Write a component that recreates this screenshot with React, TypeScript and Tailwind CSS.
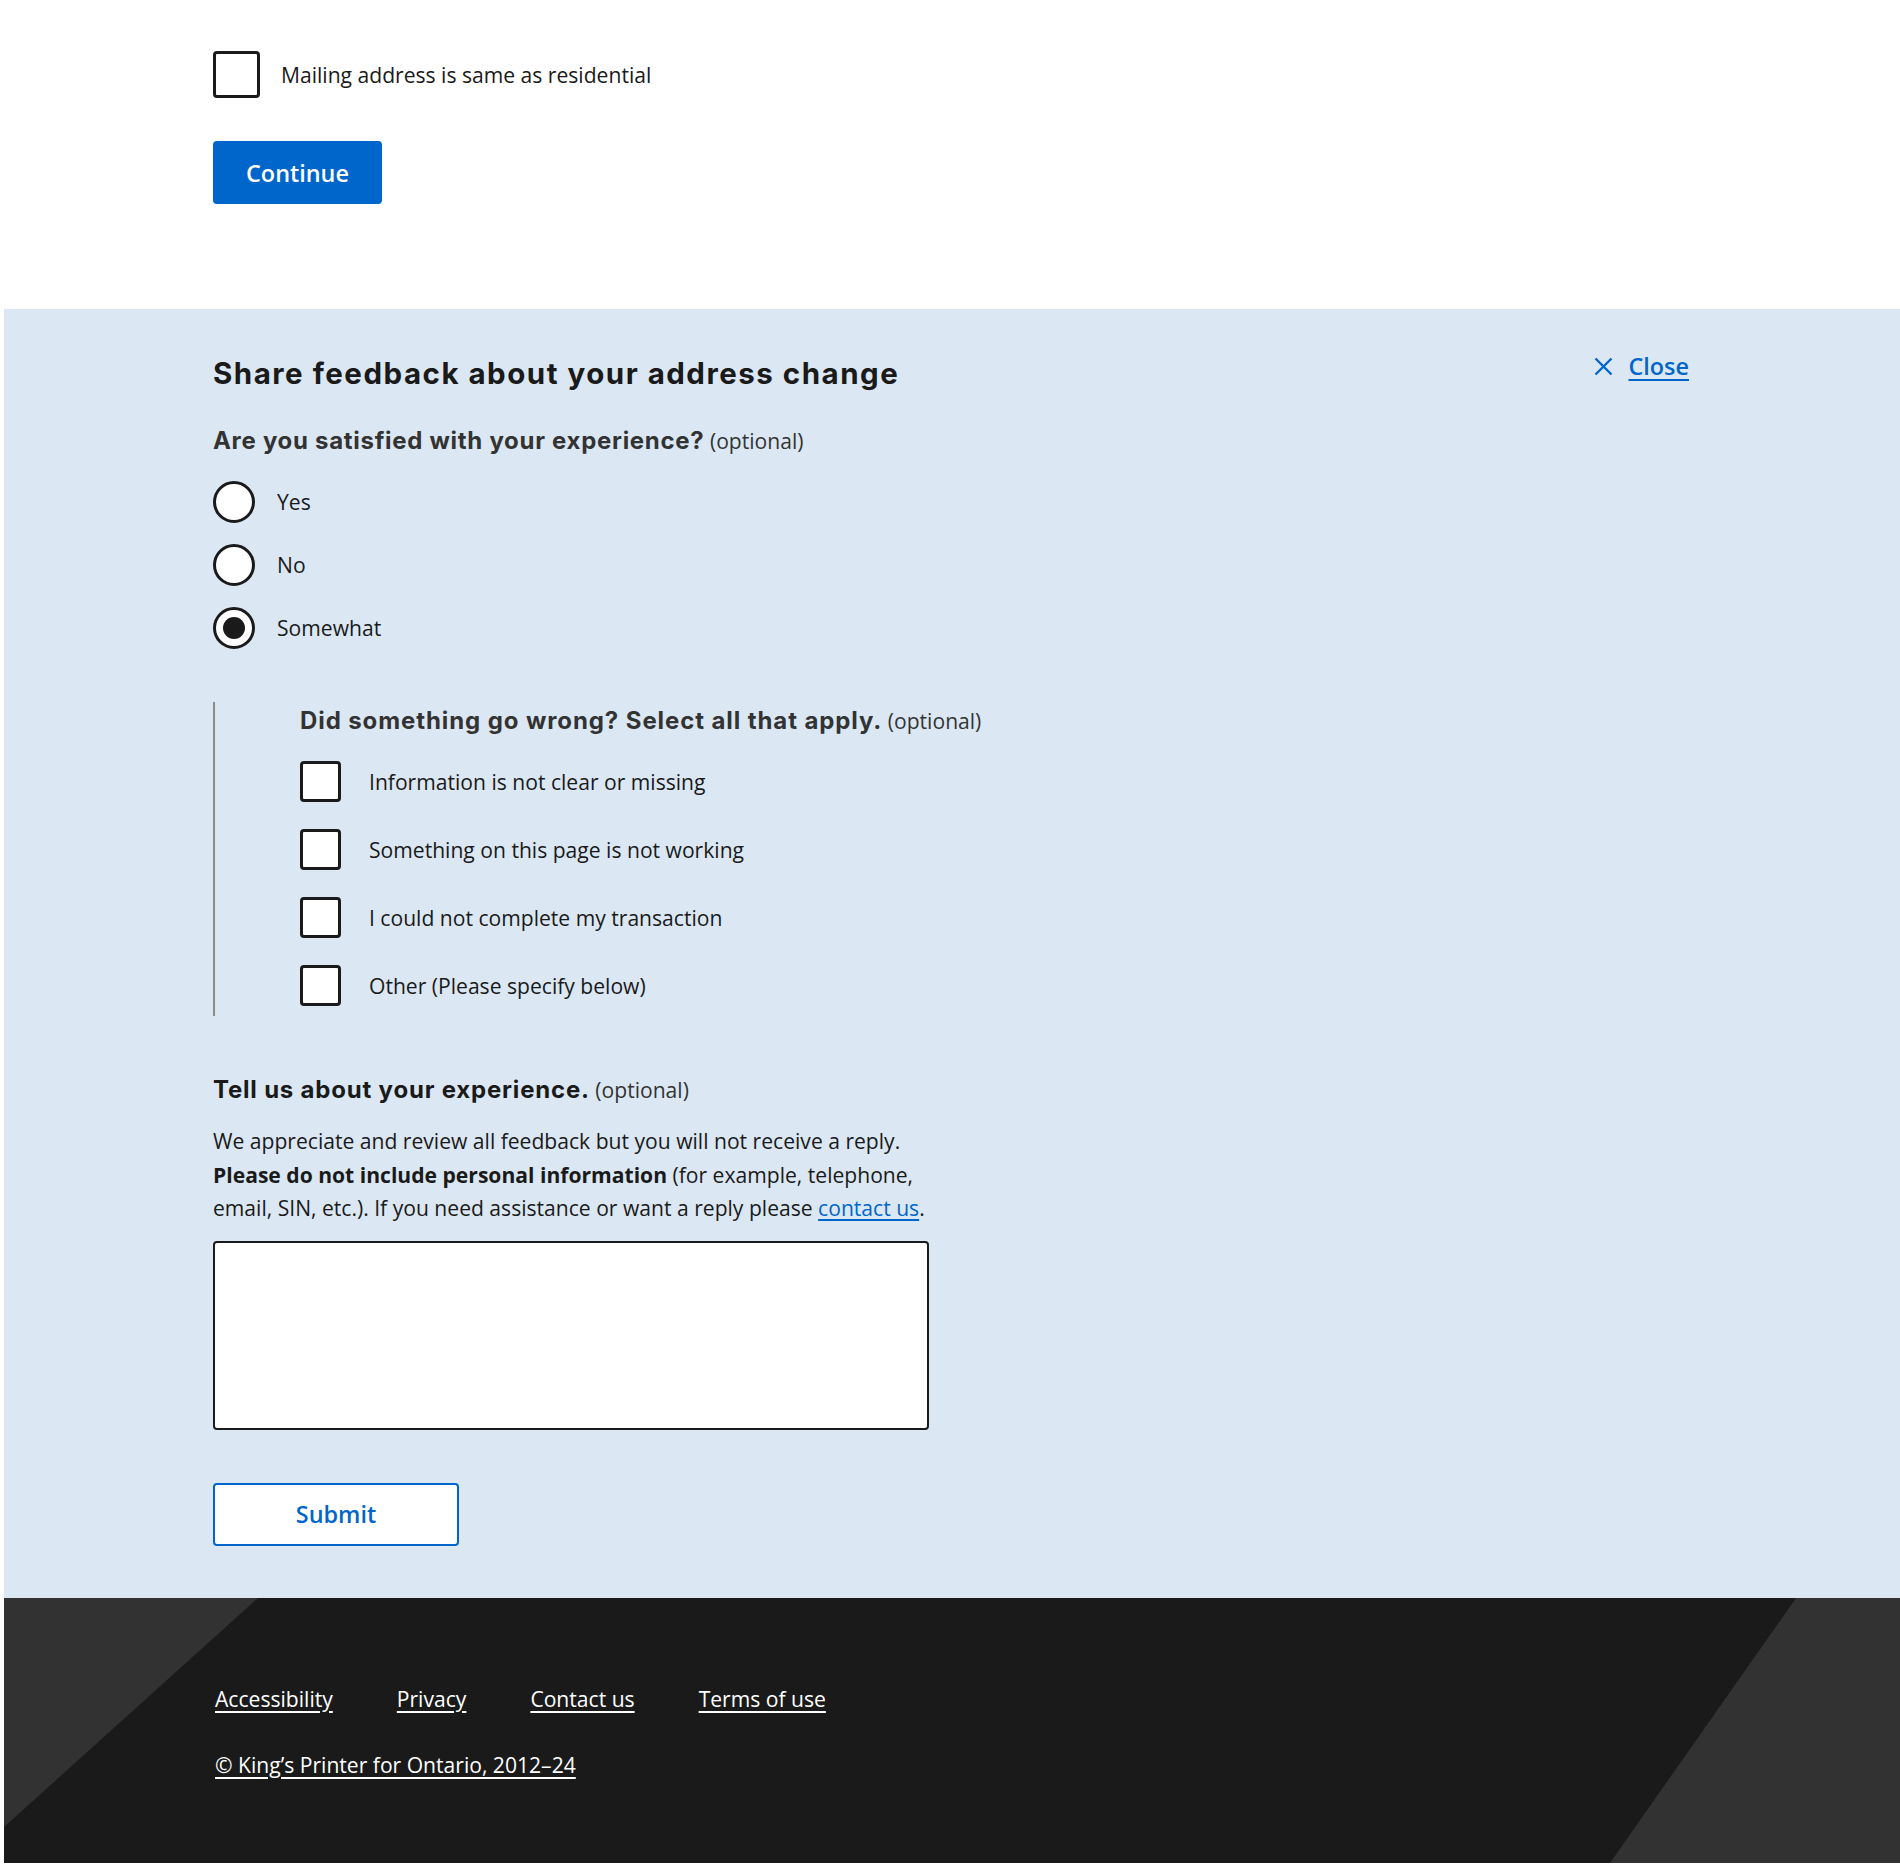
import React from "react";

const headingFont = "font-['Inter','Lato','Liberation_Sans',sans-serif] font-bold";

function Box({ size }: { size: number }) {
  return (
    <span
      className={
        size === 47
          ? "block h-[47px] w-[47px] shrink-0 rounded-[4px] border-[3px] border-[#1a1a1a] bg-white"
          : "block h-[41px] w-[41px] shrink-0 rounded-[4px] border-[3px] border-[#1a1a1a] bg-white"
      }
    />
  );
}

function Radio({ label, checked }: { label: string; checked?: boolean }) {
  return (
    <label className="flex items-center gap-[22px]">
      <span className="flex h-[42px] w-[42px] shrink-0 items-center justify-center rounded-full border-[3px] border-[#1a1a1a] bg-white">
        {checked ? <span className="block h-[22px] w-[22px] rounded-full bg-[#1a1a1a]" /> : null}
      </span>
      <span>{label}</span>
    </label>
  );
}

const reasons = [
  "Information is not clear or missing",
  "Something on this page is not working",
  "I could not complete my transaction",
  "Other (Please specify below)",
];

const footerLinks = ["Accessibility", "Privacy", "Contact us", "Terms of use"];

export default function App() {
  return (
    <div className="min-h-screen bg-white pl-[4px] font-['Open_Sans',sans-serif] text-[21.1px] leading-[32px] text-[#1a1a1a]">
      <main className="mx-auto w-[1478px] pt-[51px] pb-[105px]">
        <label className="flex items-center gap-[21px]">
          <Box size={47} />
          <span>Mailing address is same as residential</span>
        </label>
        <button className="mt-[43px] h-[63px] w-[169px] rounded-[4px] bg-[#0066cc] text-[23.4px] font-semibold text-white">
          Continue
        </button>
      </main>

      <section className="bg-[#dbe8f4] pt-[46px] pb-[52px]">
        <div className="mx-auto w-[1478px]">
          <div className="flex items-start justify-between">
            <h2 className={`${headingFont} text-[29.5px] leading-[36px] tracking-[1.5px] text-[#1a1a1a]`}>
              Share feedback about your address change
            </h2>
            <a href="#" className="mr-[2px] mt-[-5px] flex items-center gap-[16px] text-[23.4px] font-semibold leading-[32px] text-[#0066cc]">
              <svg width="19" height="19" viewBox="0 0 19 19" fill="none">
                <path d="M1.5 1.5 L17.5 17.5 M17.5 1.5 L1.5 17.5" stroke="#0066cc" strokeWidth="2.4" />
              </svg>
              <span className="underline decoration-[1.5px] underline-offset-[4px]">Close</span>
            </a>
          </div>

          <fieldset className="mt-[34px]">
            <legend className="leading-[32px]">
              <span className={`${headingFont} text-[24px] leading-none tracking-[0.7px] text-[#333333]`}>
                Are you satisfied with your experience?
              </span>{" "}
              <span className="text-[21.1px] text-[#333333]">(optional)</span>
            </legend>
            <div className="mt-[24px] flex flex-col gap-[21px]">
              <Radio label="Yes" />
              <Radio label="No" />
              <Radio label="Somewhat" checked />
            </div>
          </fieldset>

          <fieldset className="mt-[53px] border-l-2 border-[#8a8a8a] pt-[4px] pb-[10px] pl-[85px]">
            <div className="leading-[30px]">
              <span className={`${headingFont} text-[24px] leading-none tracking-[0.9px] text-[#333333]`}>
                Did something go wrong? Select all that apply.
              </span>{" "}
              <span className="text-[21.1px] text-[#333333]">(optional)</span>
            </div>
            <div className="mt-[25px] flex flex-col gap-[27px]">
              {reasons.map((r) => (
                <label key={r} className="flex items-center gap-[28px]">
                  <Box size={41} />
                  <span>{r}</span>
                </label>
              ))}
            </div>
          </fieldset>

          <div className="mt-[58px] w-[716px]">
            <div className="leading-[32px]">
              <span className={`${headingFont} text-[24px] leading-none tracking-[0.8px] text-[#1a1a1a]`}>
                Tell us about your experience.
              </span>{" "}
              <span className="text-[21.1px] text-[#333333]">(optional)</span>
            </div>
            <p className="mt-[18px] leading-[33.5px]">
              We appreciate and review all feedback but you will not receive a reply.{" "}
              <strong className="font-bold">Please do not include personal information</strong> (for example,
              telephone, email, SIN, etc.). If you need assistance or want a reply please{" "}
              <a href="#" className="text-[#0066cc] underline underline-offset-[3px]">
                contact us
              </a>
              .
            </p>
            <textarea className="mt-[16px] block h-[189px] w-[716px] resize-none rounded-[4px] border-2 border-[#1a1a1a] bg-white" />
          </div>

          <button className="mt-[53px] h-[63px] w-[246px] rounded-[4px] border-2 border-[#0066cc] bg-white text-[23.4px] font-semibold text-[#0066cc]">
            Submit
          </button>
        </div>
      </section>

      <footer className="relative h-[265px] overflow-hidden bg-[#1a1a1a] text-white">
        <svg className="absolute inset-0 h-full w-full" viewBox="0 0 1896 265" preserveAspectRatio="none">
          <polygon points="0,0 254,0 0,229" fill="#323232" />
          <polygon points="1792,0 1896,0 1896,265 1606,265" fill="#323232" />
        </svg>
        <div className="relative mx-auto w-[1478px] pt-[85px]">
          <ul className="flex gap-[64px] pl-[2px]">
            {footerLinks.map((l) => (
              <li key={l}>
                <a href="#" className="underline underline-offset-[4px]">
                  {l}
                </a>
              </li>
            ))}
          </ul>
          <p className="mt-[34px] pl-[2px]">
            <a href="#" className="underline underline-offset-[4px]">
              © King’s Printer for Ontario, 2012–24
            </a>
          </p>
        </div>
      </footer>
    </div>
  );
}
